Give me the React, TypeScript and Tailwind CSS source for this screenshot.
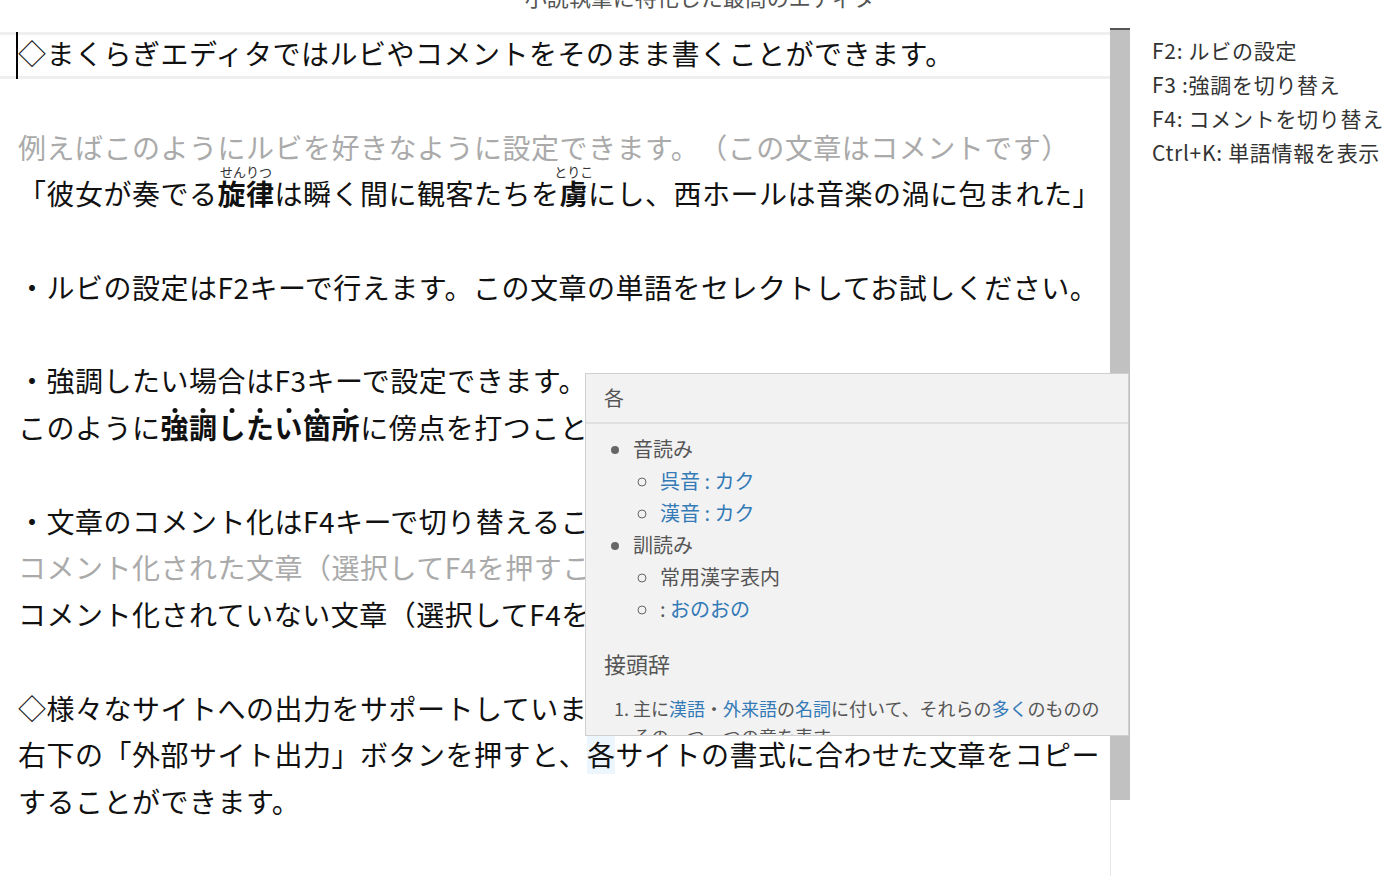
const jp = { fontFamily: '"Noto Sans CJK JP", "Noto Sans", sans-serif' }

type Line = { text?: React.ReactNode; comment?: boolean; active?: boolean }

// ルビは行の高さを変えないように上に重ねる
function Ruby({ base, ruby }: { base: string; ruby: string }) {
  return (
    <span className="relative inline-block font-bold">
      {base}
      <span className="absolute left-1/2 -translate-x-1/2 top-[-8px] text-[13px] leading-[13px] font-normal text-[#333] tracking-normal whitespace-nowrap">
        {ruby}
      </span>
    </span>
  )
}

function Emphasis({ text }: { text: string }) {
  return (
    <span className="font-bold">
      {text.split('').map((c, i) => (
        <span key={i} className="relative inline-block">
          {c}
          <span className="absolute left-1/2 -translate-x-1/2 top-[1px] w-[5px] h-[5px] rounded-full bg-[#111]" />
        </span>
      ))}
    </span>
  )
}

const lines: Line[] = [
  { text: '◇まくらぎエディタではルビやコメントをそのまま書くことができます。', active: true },
  {},
  { text: '例えばこのようにルビを好きなように設定できます。（この文章はコメントです）', comment: true },
  {
    text: (
      <>
        「彼女が奏でる<Ruby base="旋律" ruby="せんりつ" />は瞬く間に観客たちを<Ruby base="虜" ruby="とりこ" />にし、西ホールは音楽の渦に包まれた」
      </>
    ),
  },
  {},
  { text: '・ルビの設定はF2キーで行えます。この文章の単語をセレクトしてお試しください。' },
  {},
  { text: '・強調したい場合はF3キーで設定できます。' },
  {
    text: (
      <>
        このように<Emphasis text="強調したい箇所" />に傍点を打つことができます。
      </>
    ),
  },
  {},
  { text: '・文章のコメント化はF4キーで切り替えることができます。' },
  { text: 'コメント化された文章（選択してF4を押すことで切り替え）', comment: true },
  { text: 'コメント化されていない文章（選択してF4を押すことで切り替え）' },
  {},
  { text: '◇様々なサイトへの出力をサポートしています。' },
  {
    text: (
      <>
        右下の「外部サイト出力」ボタンを押すと、<span className="bg-[#eef6fd]">各</span>サイトの書式に合わせた文章をコピー
      </>
    ),
  },
  { text: 'することができます。' },
]

function EditorLine({ line }: { line: Line }) {
  return (
    <div
      className={
        'relative h-[46.75px] pl-[18px] pt-[1px] text-[28px] leading-[40px] tracking-[0.5px] whitespace-nowrap [text-spacing-trim:space-all] ' +
        (line.active ? 'shadow-[inset_0_3px_0_#efefef,inset_0_-3px_0_#efefef] ' : '') +
        (line.comment ? 'text-[#aaaaaa]' : 'text-[#111]')
      }
    >
      {line.active && <span className="absolute left-[16px] top-0 bottom-0 w-[2px] bg-black" />}
      {line.text}
    </div>
  )
}

function WordPopup() {
  return (
    <div
      className="absolute left-[585px] top-[373px] w-[544px] h-[363px] overflow-hidden bg-[#f2f2f2] border border-[#d0d0d0] text-[#555] [text-spacing-trim:space-all]"
      style={jp}
    >
      <div className="h-[50px] flex items-center pl-[18px] text-[20px] border-b-2 border-[#e0e0e0]">各</div>
      <ul className="list-disc pl-[47px] pt-[9px] text-[20px] leading-[32px] marker:text-[#666]">
        <li>
          音読み
          <ul className="list-[circle] pl-[27px]">
            <li className="text-[#337ab7]">呉音 : カク</li>
            <li className="text-[#337ab7]">漢音 : カク</li>
          </ul>
        </li>
        <li>
          訓読み
          <ul className="list-[circle] pl-[27px]">
            <li>常用漢字表内</li>
            <li>
              : <span className="text-[#337ab7]">おのおの</span>
            </li>
          </ul>
        </li>
      </ul>
      <div className="pl-[18px] mt-[22px] text-[22px] leading-[32px]">接頭辞</div>
      <ol className="list-decimal pl-[47px] mt-[15px] text-[18px] leading-[28px] pr-[26px]">
        <li>
          主に<span className="text-[#337ab7]">漢語</span>・<span className="text-[#337ab7]">外来語</span>の<span className="text-[#337ab7]">名詞</span>に付いて、それらの<span className="text-[#337ab7]">多く</span>のもののその一つ一つの意を表す。
        </li>
      </ol>
    </div>
  )
}

export default function App() {
  return (
    <div className="relative w-[1400px] h-[876px] overflow-hidden bg-white flex flex-col" style={jp}>
      <div className="h-[28px] overflow-hidden flex justify-center">
        <div className="mt-[-15px] text-[22px] leading-[22px] text-[#555]">小説執筆に特化した最高のエディタ</div>
      </div>
      <div className="flex flex-1 min-h-0">
        <div className="w-[1110px] pt-[4px] overflow-hidden">
          {lines.map((line, i) => (
            <EditorLine key={i} line={line} />
          ))}
        </div>
        <div className="w-[20px] flex flex-col">
          <div className="h-[2px] bg-[#555]" />
          <div className="h-[770px] bg-[#c1c1c1]" />
          <div className="flex-1 border-l border-[#e8e8e8]" />
        </div>
        <div className="flex-1 pl-[22px] pt-[5px] text-[21px] leading-[34px] tracking-[0.7px] text-[#333] whitespace-nowrap">
          <div>F2: ルビの設定</div>
          <div>F3 :強調を切り替え</div>
          <div>F4: コメントを切り替え</div>
          <div>Ctrl+K: 単語情報を表示</div>
        </div>
      </div>
      <WordPopup />
    </div>
  )
}
